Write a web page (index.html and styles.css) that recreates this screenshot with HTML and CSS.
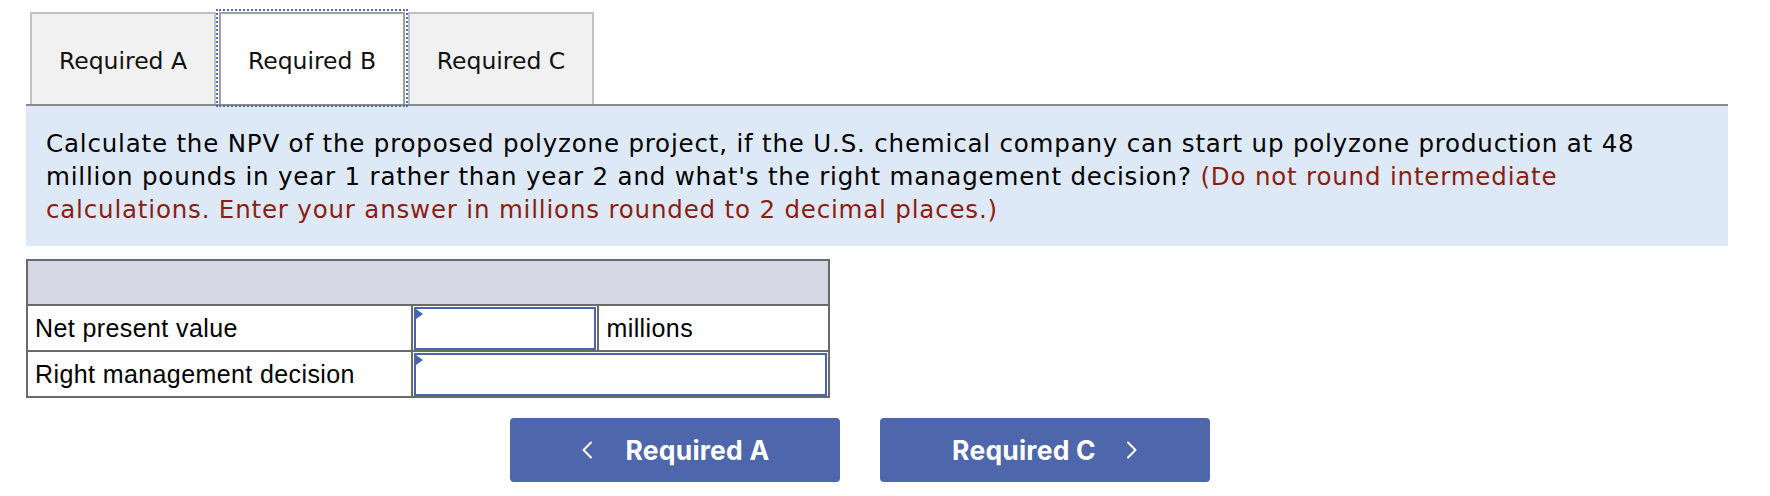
FILE: index.html
```html
<!DOCTYPE html>
<html>
<head>
<meta charset="utf-8">
<link rel="stylesheet" href="styles.css">
</head>
<body>
<div class="wrap">
  <div class="tabs">
    <div class="tab">Required A</div>
    <div class="tab active">Required B</div>
    <div class="tab">Required C</div>
  </div>
  <div class="panel">
    <p class="question">Calculate the NPV of the proposed polyzone project, if the U.S. chemical company can start up polyzone production at 48 million pounds in year 1 rather than year 2 and what's the right management decision? <span class="note">(Do not round intermediate calculations. Enter your answer in millions rounded to 2 decimal places.)</span></p>
  </div>
  <table class="answer">
    <colgroup>
      <col class="c1"><col class="c2"><col class="c3">
    </colgroup>
    <tr class="head"><td colspan="3"></td></tr>
    <tr>
      <td class="label">Net present value</td>
      <td class="inp"><div class="field"><span class="flag"></span></div></td>
      <td class="unit">millions</td>
    </tr>
    <tr>
      <td class="label">Right management decision</td>
      <td class="inp" colspan="2"><div class="field wide"><span class="flag"></span></div></td>
    </tr>
  </table>
  <div class="nav">
    <div class="btn">
      <svg class="chev" width="12" height="18" viewBox="0 0 12 18"><path d="M10 1.5 L2.5 9 L10 16.5" fill="none" stroke="#fff" stroke-width="2" stroke-linecap="round" stroke-linejoin="round"/></svg>
      <span class="btxt">Required A</span>
    </div>
    <div class="btn next">
      <span class="btxt">Required C</span>
      <svg class="chev" width="12" height="18" viewBox="0 0 12 18"><path d="M2 1.5 L9.5 9 L2 16.5" fill="none" stroke="#fff" stroke-width="2" stroke-linecap="round" stroke-linejoin="round"/></svg>
    </div>
  </div>
</div>
</body>
</html>
```

FILE: styles.css
```css
html, body {
  margin: 0;
  padding: 0;
  background: #fff;
}
.wrap {
  margin-left: 26px;
  width: 1702px;
}
.tabs {
  display: flex;
  gap: 3px;
  padding-top: 12px;
  padding-left: 4px;
  border-bottom: 2px solid #8a8a8a;
}
.tab {
  box-sizing: border-box;
  width: 186px;
  height: 92px;
  background: #f1f1f1;
  border: 2px solid #c2c2c2;
  border-bottom: none;
  display: flex;
  align-items: center;
  justify-content: center;
  font-family: "DejaVu Sans", Verdana, sans-serif;
  font-size: 23.5px;
  color: #111;
  padding-top: 4px;
}
.tab.active {
  background: #fff;
  border-color: #a0a0a0;
  outline: 2px dotted #4f6dbf;
  outline-offset: 1px;
}
.panel {
  background: #dee9f7;
  padding: 21px 20px 20px 20px;
}
.question {
  margin: 0;
  font-family: "DejaVu Sans", Verdana, sans-serif;
  font-size: 24.5px;
  letter-spacing: 0.82px;
  line-height: 33px;
  color: #000;
}
.note {
  color: #8b1e12;
}
.answer {
  margin-top: 13px;
  border-collapse: collapse;
  width: 804px;
  font-family: "Liberation Sans", Arial, sans-serif;
  font-size: 25px;
  letter-spacing: 0.4px;
  color: #000;
}
.c1 { width: 386px; }
.c2 { width: 187px; }
.c3 { width: 231px; }
.answer td {
  border: 2px solid #6a6a6a;
  height: 44px;
  padding: 0;
}
.answer .head td {
  background: #d6d9e5;
  height: 43px;
}
.label {
  padding-left: 7px !important;
}
.unit {
  padding-left: 7px !important;
}
.inp {
  padding: 0 1px 0 1px !important;
}
.field {
  box-sizing: border-box;
  position: relative;
  height: 43px;
  border: 2px solid #4a64ad;
  background: #fff;
}
.flag {
  position: absolute;
  left: 0;
  top: 0;
  width: 0;
  height: 0;
  border-top: 5px solid transparent;
  border-bottom: 5px solid transparent;
  border-left: 7px solid #4a64ad;
}
.nav {
  display: flex;
  gap: 40px;
  padding-left: 484px;
  margin-top: 20px;
}
.btn {
  box-sizing: border-box;
  width: 330px;
  height: 64px;
  border-radius: 4px;
  background: #4d66ac;
  display: flex;
  align-items: center;
  justify-content: center;
  gap: 33px;
  color: #fff;
}
.btn.next {
  gap: 30px;
}
.btxt {
  font-family: Inter, "Noto Sans", sans-serif;
  font-weight: 700;
  font-size: 26.5px;
  letter-spacing: 0.2px;
}
.chev {
  display: block;
}
```
